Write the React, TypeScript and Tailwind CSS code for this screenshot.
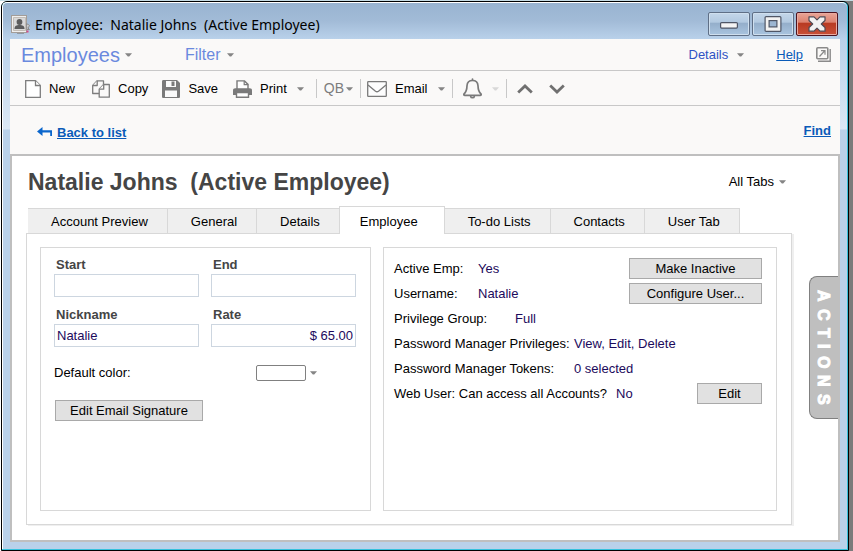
import React, { useState } from "react";

const TABS = ["Account Preview", "General", "Details", "Employee", "To-do Lists", "Contacts", "User Tab"];

const Caret = ({ className = "text-[#858585]" }: { className?: string }) => (
  <svg viewBox="0 0 7 4" className={`h-1 w-[7px] shrink-0 ${className}`} aria-hidden="true">
    <path d="M0 0.300h7L4.200 3.500H2.800z" fill="currentColor" />
  </svg>
);

const Divider = () => <span className="h-[19px] w-px bg-[#c8c8c8]" />;

const AppIcon = () => (
  <svg viewBox="0 0 20 20" className="h-5 w-5" aria-hidden="true">
    <rect x="0.500" y="0.500" width="15" height="17" fill="#efefef" stroke="#a39d98" />
    <path d="M2.500 2.500h12v13h-12z" fill="#d9d9d9" stroke="#c3bdb7" />
    <circle cx="8.500" cy="7" r="2.900" fill="#5c5c5c" />
    <path d="M3.500 14c0-3.200 2-4 5-4s5 .8 5 4z" fill="#5c5c5c" />
    <path d="M15.500 8.500l3 2-1.500 2.500 1.500 1.500h-2.500z" fill="#dcdcdc" stroke="#8b8b8b" />
    <path d="M15.500 15.500h2v2h-2z" fill="#d34a86" />
    <path d="M6 18.500h7" stroke="#8f9aa5" />
  </svg>
);

const NewIcon = () => (
  <svg viewBox="0 0 16 18" className="h-[18px] w-4" fill="#fff" stroke="#7d7d7d" strokeWidth="1.300" aria-hidden="true">
    <path d="M.7.700h9.800l4.800 4.800v11.800H.7z" />
    <path d="M10.500.700v4.800h4.800" />
  </svg>
);

const CopyIcon = () => (
  <svg viewBox="0 0 18 18" className="h-[18px] w-[18px]" fill="#faf9f8" stroke="#7d7d7d" strokeWidth="1.300" strokeLinejoin="round" aria-hidden="true">
    <path d="M10.500 13.500H.7V5.500L5.200.800h6.300v6z" />
    <path d="M.7 5.500h4.500V.8" />
    <path d="M7.200 9.200l4.500-4.700h5.600v12.700H7.200z" />
    <path d="M7.200 9.200h4.500V4.500" />
  </svg>
);

const SaveIcon = () => (
  <svg viewBox="0 0 18 18" className="h-[18px] w-[18px]" aria-hidden="true">
    <path d="M0 1.500C0 .5.500 0 1.500 0H15l3 3v13.500c0 1-.5 1.500-1.500 1.500h-15C.5 18 0 17.500 0 16.500z" fill="#7a7a7a" />
    <path d="M4 1h10v6H4zM3 10.500h12V17H3z" fill="#fafafa" />
    <path d="M9.500 1.500h3v4.500h-3z" fill="#7a7a7a" />
  </svg>
);

const PrintIcon = () => (
  <svg viewBox="0 0 19 18" className="h-[18px] w-[19px]" aria-hidden="true">
    <path d="M4 9V.9h7.500l3.500 3.500V9" fill="#fff" stroke="#7a7a7a" strokeWidth="1.400" />
    <path d="M11.200.900v3.800h4" fill="none" stroke="#7a7a7a" strokeWidth="1.200" />
    <path d="M0 10.500C0 9 .8 8.200 2.300 8.200h14.400c1.500 0 2.300.8 2.300 2.300V15H0z" fill="#7a7a7a" />
    <path d="M3.500 12.500h12v4.700h-12z" fill="#fff" stroke="#7a7a7a" strokeWidth="1.400" />
  </svg>
);

const MailIcon = () => (
  <svg viewBox="0 0 20 16" className="h-4 w-5" fill="none" stroke="#7a7a7a" strokeWidth="1.300" aria-hidden="true">
    <rect x=".7" y=".7" width="18.600" height="14.600" rx=".6" fill="#fdfdfd" />
    <path d="M1 4l7.500 6.200q1.500 1.100 3 0L19 4" />
  </svg>
);

const BellIcon = () => (
  <svg viewBox="0 0 19 21" className="h-[21px] w-[19px]" fill="none" stroke="#7a7a7a" strokeWidth="1.700" strokeLinejoin="round" strokeLinecap="round" aria-hidden="true">
    <path d="M9.500 2.500c-3.300 0-5.300 2.200-5.500 5.200-.1 4.500-.8 6.300-3 8.300-.4.800 0 1.400.8 1.400h15.400c.8 0 1.200-.6.800-1.400-2.200-2-2.900-3.800-3-8.300-.2-3-2.200-5.200-5.500-5.200z" />
    <path d="M9.500 1v1M7.700 18.500c.3 1.600 3.300 1.600 3.600 0" />
  </svg>
);

const Chevron = ({ d }: { d: string }) => (
  <svg viewBox="0 0 16 10" className="h-[10px] w-4" fill="none" stroke="#707070" strokeWidth="2.800" aria-hidden="true">
    <path d={d} />
  </svg>
);

const PopOutIcon = () => (
  <svg viewBox="0 0 15 15" className="h-[15px] w-[15px]" fill="none" stroke="#8a8a8a" aria-hidden="true">
    <rect x=".8" y=".8" width="11" height="11" rx="1" strokeWidth="1.600" />
    <path d="M14.200 2v12.200H2" strokeWidth="1.400" />
    <path d="M3.500 9.500l5-5.500M5 3.700h4v4" strokeWidth="1.200" />
  </svg>
);

const BackArrow = () => (
  <svg viewBox="0 0 15 11" className="h-[11px] w-[15px]" aria-hidden="true">
    <path d="M0 4.500L5.500 0v3.300H15V9h-1.800V5.500H5.500V9z" fill="#0a66cc" />
  </svg>
);

interface WindowButtonProps {
  label: string;
  danger?: boolean;
  children: React.ReactNode;
}

const WindowButton = ({ label, danger, children }: WindowButtonProps) => (
  <button
    aria-label={label}
    className={`flex h-6 w-[42px] items-center justify-center rounded-[2px] border ${
      danger
        ? "border-[#4d1420] bg-[linear-gradient(to_bottom,#e9a597_0%,#dc8270_42%,#b83a22_46%,#c85038_100%)] shadow-[inset_0_0_0_1px_#e9aaa0]"
        : "border-[#5f6f86] bg-[linear-gradient(to_bottom,#c4d7ea_0%,#b2c9e0_42%,#94aeca_46%,#a9c4df_100%)] shadow-[inset_0_0_0_1px_#cfdfee]"
    }`}
  >
    {children}
  </button>
);

const ToolButton = ({ icon, label, caret }: { icon: React.ReactNode; label: string; caret?: boolean }) => (
  <button className="flex items-center">
    {icon}
    <span className="ml-2">{label}</span>
    {caret && <Caret className="ml-[10px] text-[#858585]" />}
  </button>
);

interface FieldProps {
  id: string;
  label: string;
  value?: string;
  align?: string;
}

const Field = ({ id, label, value = "", align = "" }: FieldProps) => (
  <div className="flex flex-1 flex-col">
    <label htmlFor={id} className="pl-[2px] leading-[18px] font-bold text-[#454545]">{label}</label>
    <input
      id={id}
      defaultValue={value}
      className={`h-[23px] w-full border border-[#cdd6e0] bg-white px-[2px] text-[#1c0a5c] outline-none ${align}`}
    />
  </div>
);

const GrayButton = ({ children, className = "" }: { children: React.ReactNode; className?: string }) => (
  <button className={`h-[21px] border border-[#a9a9a9] bg-[#e1e1e1] leading-[19px] text-black ${className}`}>
    {children}
  </button>
);

interface InfoRowProps {
  label: string;
  value: string;
  labelWidth: string;
  action?: React.ReactNode;
}

const InfoRow = ({ label, value, labelWidth, action }: InfoRowProps) => (
  <div className="flex h-[25px] items-center">
    <span className={`shrink-0 whitespace-nowrap ${labelWidth}`}>{label}</span>
    <span className="whitespace-nowrap text-[#1c0a5c]">{value}</span>
    {action && <span className="ml-auto flex">{action}</span>}
  </div>
);

export default function App() {
  const [activeTab, setActiveTab] = useState("Employee");

  return (
    <div className="flex min-h-screen border-t border-[#c6dce4] bg-[linear-gradient(to_right,#ffffff_50%,#7b7b7b_50%)] pr-1 pl-px font-['Liberation_Sans',Arial,sans-serif] text-[13px] text-black">
      <div className="flex flex-1 flex-col rounded-t-[6px] border border-black bg-[#35c1dc]">
        <div className="mr-px mb-px flex flex-1 flex-col rounded-t-[5px] border-t border-l border-white bg-[linear-gradient(to_bottom,#99b4d1_0px,#a2bbd7_18px,#b9d1ea_36px,#dbe8f5_126px,#b9d1ea_127px)] pr-[7px] pb-[7px] pl-[7px]">
          {/* Title bar */}
          <header className="flex h-9 shrink-0 items-center">
            <div className="flex flex-1 items-center gap-1 pt-[7px] pl-px">
              <AppIcon />
              <h1 className="font-['Noto_Sans','Open_Sans',sans-serif] text-[14px] leading-5 whitespace-pre">
                {"Employee:  Natalie Johns  (Active Employee)"}
              </h1>
            </div>
            <div className="flex gap-[2px] pt-[6px] pr-[2px]">
              <WindowButton label="Minimize">
                <svg viewBox="0 0 18 7" className="mt-[2px] h-[7px] w-[18px]" aria-hidden="true">
                  <rect x=".6" y=".6" width="16.800" height="5.500" rx="1" fill="#f4f4f4" stroke="#4f5666" strokeWidth="1.200" />
                </svg>
              </WindowButton>
              <WindowButton label="Maximize">
                <svg viewBox="0 0 18 16" className="h-4 w-[18px]" aria-hidden="true">
                  <rect x="1.100" y=".6" width="15.800" height="14.800" rx="1" fill="#f2f2f2" stroke="#4f5666" strokeWidth="1.200" />
                  <rect x="5.100" y="4.600" width="7.800" height="6.300" fill="#9cb6d2" stroke="#4f5666" strokeWidth="1.200" />
                </svg>
              </WindowButton>
              <WindowButton label="Close" danger>
                <svg viewBox="0 0 18 16" className="h-4 w-[18px]" aria-hidden="true">
                  <path
                    d="M1 .8h5L9 3.800 12 .8h5v3.700L13.300 8l3.700 3.500v3.700h-5L9 12.200l-3 3H1v-3.700L4.700 8 1 4.500z"
                    fill="#f2f2f2"
                    stroke="#4f4a55"
                    strokeWidth="1.200"
                    strokeLinejoin="round"
                  />
                </svg>
              </WindowButton>
            </div>
          </header>

          <div className="flex flex-1 flex-col bg-[#faf9f8]">
            {/* Menu bar */}
            <nav className="flex h-8 items-center border-b border-[#c8c8c8] pr-[9px] pl-[11px]">
              <button className="flex items-center gap-[5px] text-xl leading-6 text-[#6a89de]">
                Employees <Caret />
              </button>
              <button className="ml-[53px] flex items-center gap-[6px] text-base text-[#6a89de]">
                Filter <Caret />
              </button>
              <button className="ml-auto flex items-center gap-[9px] pt-px text-[#2f52c4]">
                Details <Caret />
              </button>
              <a href="#help" className="ml-8 text-[#0a5bb8] underline">Help</a>
              <button aria-label="Open in new window" className="ml-[13px]"><PopOutIcon /></button>
            </nav>

            {/* Toolbar */}
            <div className="flex h-[35px] items-center border-b border-[#c8c8c8] pt-px pl-[15px]">
              <ToolButton icon={<NewIcon />} label="New" />
              <span className="w-[17px]" />
              <ToolButton icon={<CopyIcon />} label="Copy" />
              <span className="w-[14px]" />
              <ToolButton icon={<SaveIcon />} label="Save" />
              <span className="w-[15px]" />
              <ToolButton icon={<PrintIcon />} label="Print" caret />
              <span className="w-3" />
              <Divider />
              <button className="mr-[7px] ml-[7px] flex items-center gap-[2px] text-[14px] text-[#7d7d7d]">
                QB <Caret />
              </button>
              <Divider />
              <span className="w-[6px]" />
              <ToolButton icon={<MailIcon />} label="Email" caret />
              <span className="w-[7px]" />
              <Divider />
              <button aria-label="Alerts" className="mr-[7px] ml-[10px] flex items-center gap-[10px]">
                <BellIcon />
                <Caret className="text-[#d8d8d8]" />
              </button>
              <Divider />
              <button aria-label="Previous" className="ml-[10px]"><Chevron d="M1.200 8.500L8 2l6.800 6.500" /></button>
              <button aria-label="Next" className="ml-4"><Chevron d="M1.200 1.500L8 8l6.800-6.500" /></button>
            </div>

            <div className="flex h-12 items-center justify-between pt-px pr-[9px] pl-[27px] font-bold text-[#0a5bb8]">
              <a href="#list" className="flex items-center gap-[5px] pt-1">
                <BackArrow />
                <span className="underline">Back to list</span>
              </a>
              <a href="#find" className="underline">Find</a>
            </div>

            {/* Record */}
            <main className="flex flex-1 border-2 border-[#bfbfbf] bg-white pl-[14px]">
              <div className="flex flex-1 flex-col pb-[15px]">
                <div className="flex h-[50px] items-center justify-between pt-px pr-[6px] pl-[2px]">
                  <h2 className="text-[23px] leading-8 font-bold whitespace-pre text-[#454545]">
                    {"Natalie Johns  (Active Employee)"}
                  </h2>
                  <button className="flex items-center gap-[5px]">
                    All Tabs <Caret />
                  </button>
                </div>

                <div role="tablist" className="relative z-10 -mb-px flex items-end pl-[2px]">
                  {TABS.map((tab) => (
                    <button
                      key={tab}
                      role="tab"
                      aria-selected={tab === activeTab}
                      onClick={() => setActiveTab(tab)}
                      className={`whitespace-nowrap border-[#d8d8d8] ${
                        tab === activeTab
                          ? "-ml-px h-7 border-x border-t bg-white pt-[2px] pl-5 pr-[26px]"
                          : "h-[26px] border-y border-r bg-[#efefef] pt-px pr-[19px] pl-[23px]"
                      }`}
                    >
                      {tab}
                    </button>
                  ))}
                </div>

                <div className="flex flex-1 gap-3 border border-[#d8d8d8] p-[13px] pr-[14px] shadow-[2px_1px_0_#efefef]">
                  <section className="w-[331px] shrink-0 border border-[#d8d8d8] pt-2 pr-[14px] pl-[13px]">
                    <div className="flex gap-3">
                      <Field id="start" label="Start" />
                      <Field id="end" label="End" />
                    </div>
                    <div className="mt-[9px] flex gap-3">
                      <Field id="nickname" label="Nickname" value="Natalie" />
                      <Field id="rate" label="Rate" value="$ 65.00" align="text-right" />
                    </div>
                    <div className="mt-4 flex items-center">
                      <label htmlFor="color" className="w-[202px] leading-5">Default color:</label>
                      <button id="color" className="flex items-center gap-1">
                        <span className="h-4 w-[50px] rounded-[2px] border border-[#808080] bg-white" />
                        <Caret />
                      </button>
                    </div>
                    <GrayButton className="mt-[17px] ml-px w-[148px]">Edit Email Signature</GrayButton>
                  </section>

                  <section className="flex-1 border border-[#d8d8d8] pt-2 pr-[14px] pl-[10px]">
                    <InfoRow
                      label="Active Emp:"
                      value="Yes"
                      labelWidth="w-[84px]"
                      action={<GrayButton className="w-[133px]">Make Inactive</GrayButton>}
                    />
                    <InfoRow
                      label="Username:"
                      value="Natalie"
                      labelWidth="w-[84px]"
                      action={<GrayButton className="w-[133px]">Configure User...</GrayButton>}
                    />
                    <InfoRow label="Privilege Group:" value="Full" labelWidth="w-[121px]" />
                    <InfoRow label="Password Manager Privileges:" value="View, Edit, Delete" labelWidth="w-[180px]" />
                    <InfoRow label="Password Manager Tokens:" value="0 selected" labelWidth="w-[180px]" />
                    <InfoRow
                      label="Web User: Can access all Accounts?"
                      value="No"
                      labelWidth="w-[222px]"
                      action={<GrayButton className="w-[65px]">Edit</GrayButton>}
                    />
                  </section>
                </div>
              </div>

              <button
                aria-label="ACTIONS"
                className="mt-[120px] ml-[17px] flex h-[143px] w-[29px] shrink-0 flex-col items-center justify-center gap-[7px] rounded-l-lg border border-r-0 border-[#808080] bg-[#bfbfbf] pr-[2px] text-base leading-4 font-bold text-white [-webkit-text-stroke:1px_white]"
              >
                {"ACTIONS".split("").map((letter, i) => (
                  <span key={i} className="[writing-mode:vertical-rl]">{letter}</span>
                ))}
              </button>
            </main>
          </div>
        </div>
      </div>
    </div>
  );
}
